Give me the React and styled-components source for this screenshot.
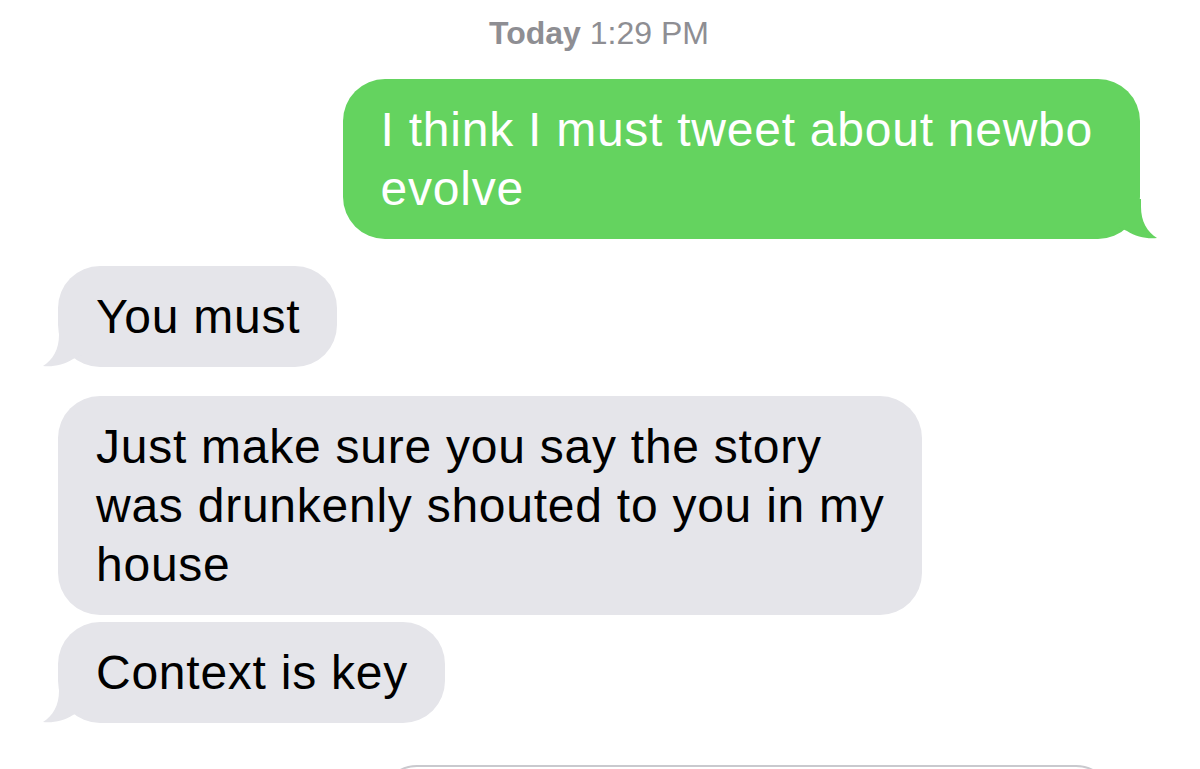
import React from "react";
import styled, { createGlobalStyle, css } from "styled-components";

const GlobalStyle = createGlobalStyle`
  html, body {
    margin: 0;
    padding: 0;
    background: #ffffff;
    overflow: hidden;
  }
  body {
    font-family: "Liberation Sans", Arial, sans-serif;
    -webkit-font-smoothing: antialiased;
  }
`;

const Screen = styled.div`
  width: 1200px;
  height: 769px;
  overflow: hidden;
  display: flex;
  flex-direction: column;
  padding: 0 60px 0 58px;
  box-sizing: border-box;
`;

const Timestamp = styled.div`
  padding-top: 14px;
  height: 38px;
  line-height: 38px;
  text-align: center;
  font-size: 32px;
  color: #8e8e93;
  margin-bottom: 27px;

  b {
    font-weight: 700;
  }
`;

const Row = styled.div`
  display: flex;
  justify-content: ${(p) => (p.$sent ? "flex-end" : "flex-start")};
  margin-top: ${(p) => p.$gap || 0}px;
`;

const Bubble = styled.div`
  position: relative;
  padding: 21px ${(p) => (p.$sent ? 47 : 37)}px 21px 38px;
  border-radius: 42px;
  font-size: 48px;
  line-height: 59px;
  letter-spacing: 0.75px;
  background: ${(p) => (p.$sent ? "#64d35f" : "#e5e5ea")};
  color: ${(p) => (p.$sent ? "#ffffff" : "#000000")};
`;

const TailSvg = styled.svg`
  position: absolute;
  bottom: 0;
  width: 40px;
  height: 40px;
  ${(p) =>
    p.$sent
      ? css`
          right: -18px;
          transform: scaleX(-1);
        `
      : css`
          left: -16px;
        `}
`;

const Composer = styled.div`
  margin: 42px 27px 0 322px;
  height: 70px;
  border: 2px solid #c9c9ce;
  border-radius: 40px;
  flex-shrink: 0;
`;

function Tail({ sent }) {
  return (
    <TailSvg $sent={sent} viewBox="0 0 40 40">
      <path
        d="M17 0 L17 8 C17 22 11 33 1 39 C11 40 22 38 31 32 L40 28 L40 0 Z"
        fill={sent ? "#64d35f" : "#e5e5ea"}
      />
    </TailSvg>
  );
}

function Message({ sent, tail, gap, children }) {
  return (
    <Row $sent={sent} $gap={gap}>
      <Bubble $sent={sent}>
        {tail && <Tail sent={sent} />}
        <span style={{ position: "relative" }}>{children}</span>
      </Bubble>
    </Row>
  );
}

export default function App() {
  return (
    <>
      <GlobalStyle />
      <Screen>
        <Timestamp>
          <b>Today</b> 1:29 PM
        </Timestamp>
        <Message sent tail>
          I think I must tweet about newbo
          <br />
          evolve
        </Message>
        <Message tail gap={27}>
          You must
        </Message>
        <Message gap={29}>
          Just make sure you say the story
          <br />
          was drunkenly shouted to you in my
          <br />
          house
        </Message>
        <Message tail gap={7}>
          Context is key
        </Message>
        <Composer />
      </Screen>
    </>
  );
}
